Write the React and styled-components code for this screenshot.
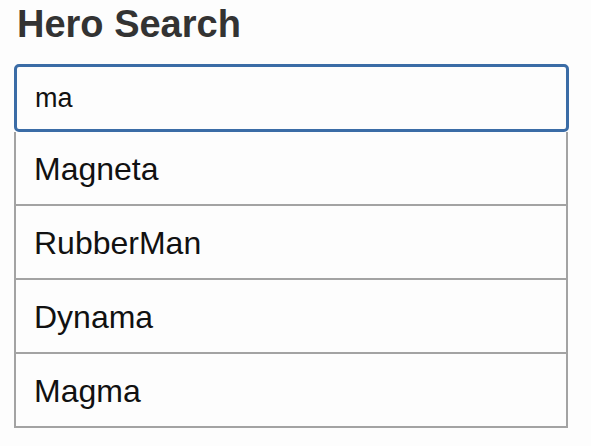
import React, { useState } from 'react';
import styled, { createGlobalStyle } from 'styled-components';

const GlobalStyle = createGlobalStyle`
  body {
    margin: 0;
    background: #fdfdfd;
    font-family: "Liberation Sans", Arial, sans-serif;
  }
`;

const Page = styled.div`
  padding: 0 0 0 14px;
  width: 555px;
`;

const Title = styled.h2`
  margin: 5px 0 0 3px;
  font-size: 38px;
  line-height: 38px;
  font-weight: bold;
  color: #333;
`;

const SearchBox = styled.input`
  display: block;
  box-sizing: border-box;
  width: 555px;
  height: 68px;
  margin-top: 21px;
  padding: 0 0 0 18px;
  border: 3px solid #3b6ca6;
  border-radius: 5px;
  background: #fdfdfd;
  font-family: "Liberation Sans", Arial, sans-serif;
  font-size: 27px;
  color: #111;
  outline: none;
`;

const Results = styled.ul`
  list-style: none;
  margin: 0;
  padding: 0;
  width: 554px;
  box-sizing: border-box;
  border-left: 2px solid #a3a3a3;
  border-right: 2px solid #a3a3a3;
`;

const Result = styled.li`
  box-sizing: border-box;
  height: 74px;
  display: flex;
  align-items: center;
  padding: 2px 0 0 18px;
  border-bottom: 2px solid #a3a3a3;
  font-size: 32px;
  color: #111;
  background: #fdfdfd;
  cursor: pointer;
`;

const heroes = ['Magneta', 'RubberMan', 'Dynama', 'Magma'];

const App = () => {
  const [term, setTerm] = useState('ma');
  return (
    <Page>
      <GlobalStyle />
      <Title>Hero Search</Title>
      <SearchBox value={term} onChange={(e) => setTerm(e.target.value)} />
      <Results>
        {heroes.map((name) => (
          <Result key={name}>{name}</Result>
        ))}
      </Results>
    </Page>
  );
};

export default App;
